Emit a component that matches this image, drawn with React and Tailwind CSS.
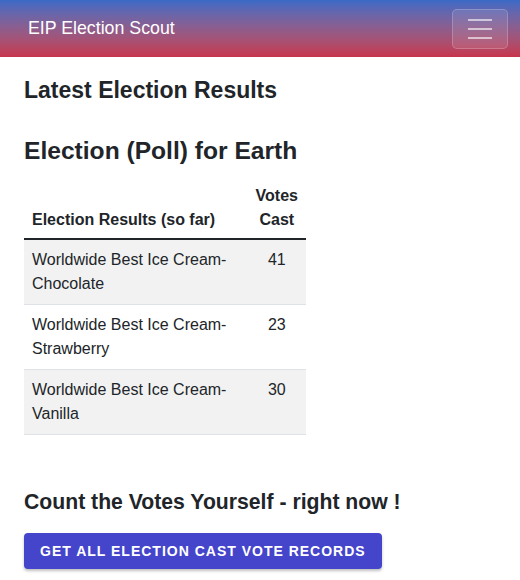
import React from 'react';

const rows = [
  { name: 'Worldwide Best Ice Cream-Chocolate', votes: 41 },
  { name: 'Worldwide Best Ice Cream-Strawberry', votes: 23 },
  { name: 'Worldwide Best Ice Cream-Vanilla', votes: 30 },
];

export default function App() {
  return (
    <div className="min-h-[580px] bg-white text-[#212529] font-['Liberation_Sans',Arial,sans-serif]">
      <header className="h-[57px] bg-gradient-to-b from-[#3869c6] to-[#c8334c] flex items-center justify-between pl-[28px] pr-[12px]">
        <span className="text-white text-[17.75px] leading-none">EIP Election Scout</span>
        <button className="w-[56px] h-[40px] rounded-[5px] border border-white/20 bg-white/10 flex flex-col items-center justify-center gap-[7px]">
          <span className="block w-[24px] h-[2px] bg-white/60" />
          <span className="block w-[24px] h-[2px] bg-white/60" />
          <span className="block w-[24px] h-[2px] bg-white/60" />
        </button>
      </header>

      <main className="px-[24px]">
        <h2 className="mt-[20px] text-[23px] leading-[26px] font-bold">Latest Election Results</h2>
        <h3 className="mt-[33px] text-[24.6px] leading-[30px] font-bold">Election (Poll) for Earth</h3>

        <table className="mt-[10px] w-[282px] border-collapse text-[16px] leading-[24px]">
          <thead>
            <tr className="border-b-2 border-[#212529] align-bottom">
              <th className="text-left font-bold p-[8px] pb-[6px]">Election Results (so far)</th>
              <th className="w-[58px] text-center font-bold p-[8px] pb-[6px]">Votes Cast</th>
            </tr>
          </thead>
          <tbody>
            {rows.map((r, i) => (
              <tr key={r.name} className={`border-b border-[#dee2e6] align-top ${i % 2 === 0 ? 'bg-[#f2f2f2]' : 'bg-white'}`}>
                <td className="p-[8px]">{r.name}</td>
                <td className="p-[8px] text-center">{r.votes}</td>
              </tr>
            ))}
          </tbody>
        </table>

        <h4 className="mt-[55px] text-[21.2px] leading-[24px] font-bold">Count the Votes Yourself - right now !</h4>
        <button className="mt-[19px] h-[36px] px-[16px] rounded-[4px] bg-[#4545cc] text-white text-[14px] font-bold uppercase tracking-[1px] shadow-[0_2px_3px_rgba(0,0,0,0.25)]">
          Get all election cast vote records
        </button>
      </main>
    </div>
  );
}
